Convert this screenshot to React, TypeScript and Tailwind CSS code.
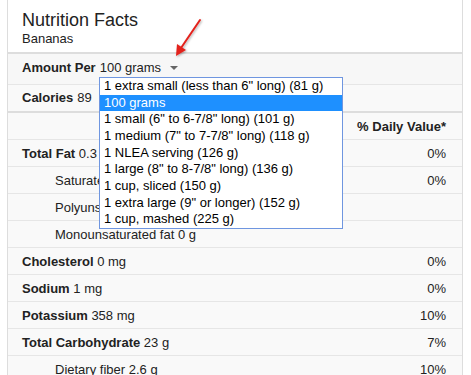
const rows = [
  { label: "Total Fat", value: "0.3 g", dv: "0%", bold: true },
  { label: "Saturated fat", value: "0.1 g", dv: "0%", bold: false },
  { label: "Polyunsaturated fat", value: "0.1 g", dv: "", bold: false },
  { label: "Monounsaturated fat", value: "0 g", dv: "", bold: false },
  { label: "Cholesterol", value: "0 mg", dv: "0%", bold: true },
  { label: "Sodium", value: "1 mg", dv: "0%", bold: true },
  { label: "Potassium", value: "358 mg", dv: "10%", bold: true },
  { label: "Total Carbohydrate", value: "23 g", dv: "7%", bold: true },
  { label: "Dietary fiber", value: "2.6 g", dv: "10%", bold: false },
];

const options = [
  "1 extra small (less than 6\" long) (81 g)",
  "100 grams",
  "1 small (6\" to 6-7/8\" long) (101 g)",
  "1 medium (7\" to 7-7/8\" long) (118 g)",
  "1 NLEA serving (126 g)",
  "1 large (8\" to 8-7/8\" long) (136 g)",
  "1 cup, sliced (150 g)",
  "1 extra large (9\" or longer) (152 g)",
  "1 cup, mashed (225 g)",
];

function App() {
  return (
    <div className="relative h-[375px] w-[471px] overflow-hidden bg-white font-['Liberation_Sans',Arial,sans-serif] text-[13px] leading-[15px] text-[#222]">

      <div className="ml-[7px] w-[456px] border-x border-[#dddddd]">

        <div className="h-[54px] border-b-2 border-[#dddddd] bg-white px-[14px] pt-[10px]">
          <div className="text-[18px] leading-[21px] text-[#222]">
            Nutrition Facts
          </div>
          <div className="text-[13px] leading-[15px]">
            Bananas
          </div>
        </div>

        <div className="flex h-[31px] items-start border-b border-[#e6e6e6] bg-[#f7f7f7] px-[14px] pt-[6px]">
          <span className="font-bold">Amount Per</span>
          <span className="ml-[4px]">100 grams</span>
          <span className="ml-[9px] mt-[6px] h-0 w-0 border-x-[4px] border-t-[4px] border-x-transparent border-t-[#666]" />
        </div>

        <div className="flex h-[28px] items-center border-b-2 border-[#dddddd] bg-[#f9f9f9] px-[14px] pb-[2px]">
          <span className="font-bold">Calories</span>
          <span className="ml-[4px]">89</span>
        </div>

        <div className="flex h-[27px] items-center justify-end border-b border-[#e6e6e6] bg-[#f9f9f9] pr-[16px] font-bold">
          % Daily Value*
        </div>

        {rows.map((row) => (
          <div
            key={row.label}
            className="flex h-[27px] items-center justify-between border-b border-[#e6e6e6] bg-[#f9f9f9] pr-[16px]"
          >
            <span className={row.bold ? "pl-[14px]" : "pl-[47px]"}>
              <span className={row.bold ? "font-bold" : ""}>{row.label}</span>
              {" "}
              {row.value}
            </span>
            <span>{row.dv}</span>
          </div>
        ))}

      </div>

      {/* open select popup */}
      <div className="absolute left-[99px] top-[77px] w-[244px] border border-[#6f96e0] bg-white">
        {options.map((opt, i) => (
          <div
            key={opt}
            className={
              i === 1
                ? "h-[16.67px] whitespace-nowrap bg-[#1e90ff] pl-[4px] leading-[16px] text-white"
                : "h-[16.67px] whitespace-nowrap pl-[4px] leading-[16px] text-black"
            }
          >
            {opt}
          </div>
        ))}
      </div>

      {/* annotation arrow */}
      <svg
        className="absolute left-0 top-0"
        width="471"
        height="80"
        viewBox="0 0 471 80"
      >
        <defs>
          <filter id="sh" x="-20%" y="-20%" width="140%" height="140%">
            <feDropShadow dx="1" dy="1" stdDeviation="1" floodColor="#000" floodOpacity="0.3" />
          </filter>
        </defs>
        <g filter="url(#sh)">
          <line x1="200" y1="20" x2="181" y2="48" stroke="#e3211b" strokeWidth="2" strokeLinecap="round" />
          <polygon points="176,56 177,44 186,50" fill="#e3211b" />
        </g>
      </svg>

    </div>
  );
}

export default App;
